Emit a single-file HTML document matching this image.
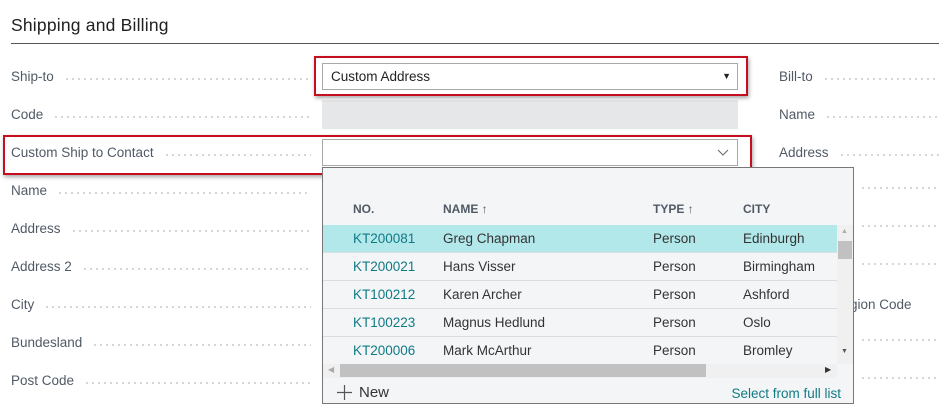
<!DOCTYPE html>
<html><head><style>
body{margin:0;width:939px;height:414px;background:#fff;font-family:"Liberation Sans",sans-serif;position:relative;overflow:hidden;color:#333}
.a{position:absolute}
.t{left:11px;top:15px;font-size:17.5px;color:#212121;letter-spacing:0.2px}
.hr{left:11px;top:43px;width:928px;height:1px;background:#555}
.lab{position:absolute;font-size:13.5px;color:#505a66;line-height:16px;white-space:nowrap;display:flex;align-items:center}
.lab span.d{flex:1;margin-left:10px;height:2px;margin-top:4px;background:radial-gradient(circle,#c8c8c8 0.8px,transparent 1px) 0 0/6px 2px repeat-x}
.in{position:absolute;left:322px;width:416px;height:27px;border:1px solid #a8a8a8;background:#fff;box-sizing:border-box}
.red{position:absolute;border:2px solid #c50f1f;box-shadow:1px 2px 4px rgba(0,0,0,.35)}
.pop{left:322px;top:167px;width:532px;height:237px;border:1px solid #777;background:#f4f5f7;box-sizing:border-box}
.row{position:absolute;left:0;width:514px;height:27px;border-bottom:1px solid #d9dce0;font-size:13.5px;line-height:27px}
.row span{position:absolute}
.c1{left:30px;color:#107a84}.c2{left:120px;color:#333}.c3{left:330px;color:#333}.c4{left:420px;color:#333}
.hd{position:absolute;top:34px;font-size:12px;font-weight:bold;color:#505a66}
</style></head><body>
<div class="a t">Shipping and Billing</div>
<div class="a hr"></div>

<div class="lab" style="left:11px;top:69px;width:300px">Ship-to<span class="d"></span></div>
<div class="lab" style="left:11px;top:107px;width:300px">Code<span class="d"></span></div>
<div class="lab" style="left:11px;top:145px;width:300px">Custom Ship to Contact<span class="d"></span></div>
<div class="lab" style="left:11px;top:183px;width:300px">Name<span class="d"></span></div>
<div class="lab" style="left:11px;top:221px;width:300px">Address<span class="d"></span></div>
<div class="lab" style="left:11px;top:259px;width:300px">Address 2<span class="d"></span></div>
<div class="lab" style="left:11px;top:297px;width:300px">City<span class="d"></span></div>
<div class="lab" style="left:11px;top:335px;width:300px">Bundesland<span class="d"></span></div>
<div class="lab" style="left:11px;top:373px;width:300px">Post Code<span class="d"></span></div>

<div class="lab" style="left:779px;top:69px;width:170px">Bill-to<span class="d"></span></div>
<div class="lab" style="left:779px;top:107px;width:170px">Name<span class="d"></span></div>
<div class="lab" style="left:779px;top:145px;width:170px">Address<span class="d"></span></div>
<div class="lab" style="left:850px;top:297px;width:100px">gion Code</div>
<div class="lab" style="left:856px;top:183px;width:90px"><span class="d" style="margin-left:4px"></span></div>
<div class="lab" style="left:856px;top:221px;width:90px"><span class="d" style="margin-left:4px"></span></div>
<div class="lab" style="left:856px;top:259px;width:90px"><span class="d" style="margin-left:4px"></span></div>
<div class="lab" style="left:856px;top:335px;width:90px"><span class="d" style="margin-left:4px"></span></div>
<div class="lab" style="left:856px;top:373px;width:90px"><span class="d" style="margin-left:4px"></span></div>

<div class="in" style="top:63px;font-size:13.5px;line-height:25px;padding-left:8px;color:#222">Custom Address<span class="a" style="right:6px;top:0;font-size:9px">▼</span></div>
<div class="a" style="left:322px;top:100px;width:416px;height:29px;background:#e6e7e9"></div>
<div class="in" style="top:139px"><svg class="a" style="right:8px;top:9px" width="12" height="8"><path d="M1 1l5 5 5-5" stroke="#666" fill="none"/></svg></div>

<div class="red" style="left:314px;top:56px;width:430px;height:36px"></div>
<div class="red" style="left:3px;top:135px;width:745px;height:36px"></div>

<div class="a pop">
<div class="hd" style="left:30px">NO.</div>
<div class="hd" style="left:120px">NAME ↑</div>
<div class="hd" style="left:330px">TYPE ↑</div>
<div class="hd" style="left:420px">CITY</div>
<div class="row" style="top:57px;background:#b2e8ea"><span class="c1">KT200081</span><span class="c2">Greg Chapman</span><span class="c3">Person</span><span class="c4">Edinburgh</span></div>
<div class="row" style="top:85px"><span class="c1">KT200021</span><span class="c2">Hans Visser</span><span class="c3">Person</span><span class="c4">Birmingham</span></div>
<div class="row" style="top:113px"><span class="c1">KT100212</span><span class="c2">Karen Archer</span><span class="c3">Person</span><span class="c4">Ashford</span></div>
<div class="row" style="top:141px"><span class="c1">KT100223</span><span class="c2">Magnus Hedlund</span><span class="c3">Person</span><span class="c4">Oslo</span></div>
<div class="row" style="top:169px;border:none"><span class="c1">KT200006</span><span class="c2">Mark McArthur</span><span class="c3">Person</span><span class="c4">Bromley</span></div>
<div class="a" style="left:514px;top:57px;width:16px;height:139px;background:#f0f0f0"></div>
<div class="a" style="left:515px;top:73px;width:14px;height:18px;background:#c1c1c1"></div>
<div class="a" style="left:518px;top:60px;font-size:7px;color:#aaa">▲</div>
<div class="a" style="left:518px;top:180px;font-size:7px;color:#555">▼</div>
<div class="a" style="left:0;top:196px;width:514px;height:14px;background:#f0f0f0"></div>
<div class="a" style="left:17px;top:196px;width:366px;height:13px;background:#c1c1c1"></div>
<div class="a" style="left:5px;top:197px;font-size:8px;color:#aaa">◀</div>
<div class="a" style="left:502px;top:197px;font-size:8px;color:#333">▶</div>
<svg class="a" style="left:14px;top:217px" width="15" height="15"><path d="M7.5 0v15M0 7.5h15" stroke="#555" stroke-width="1.2"/></svg>
<div class="a" style="left:36px;top:216px;font-size:15px;color:#333">New</div>
<div class="a" style="right:12px;top:218px;font-size:13.5px;color:#107a84">Select from full list</div>
</div>
</body></html>
